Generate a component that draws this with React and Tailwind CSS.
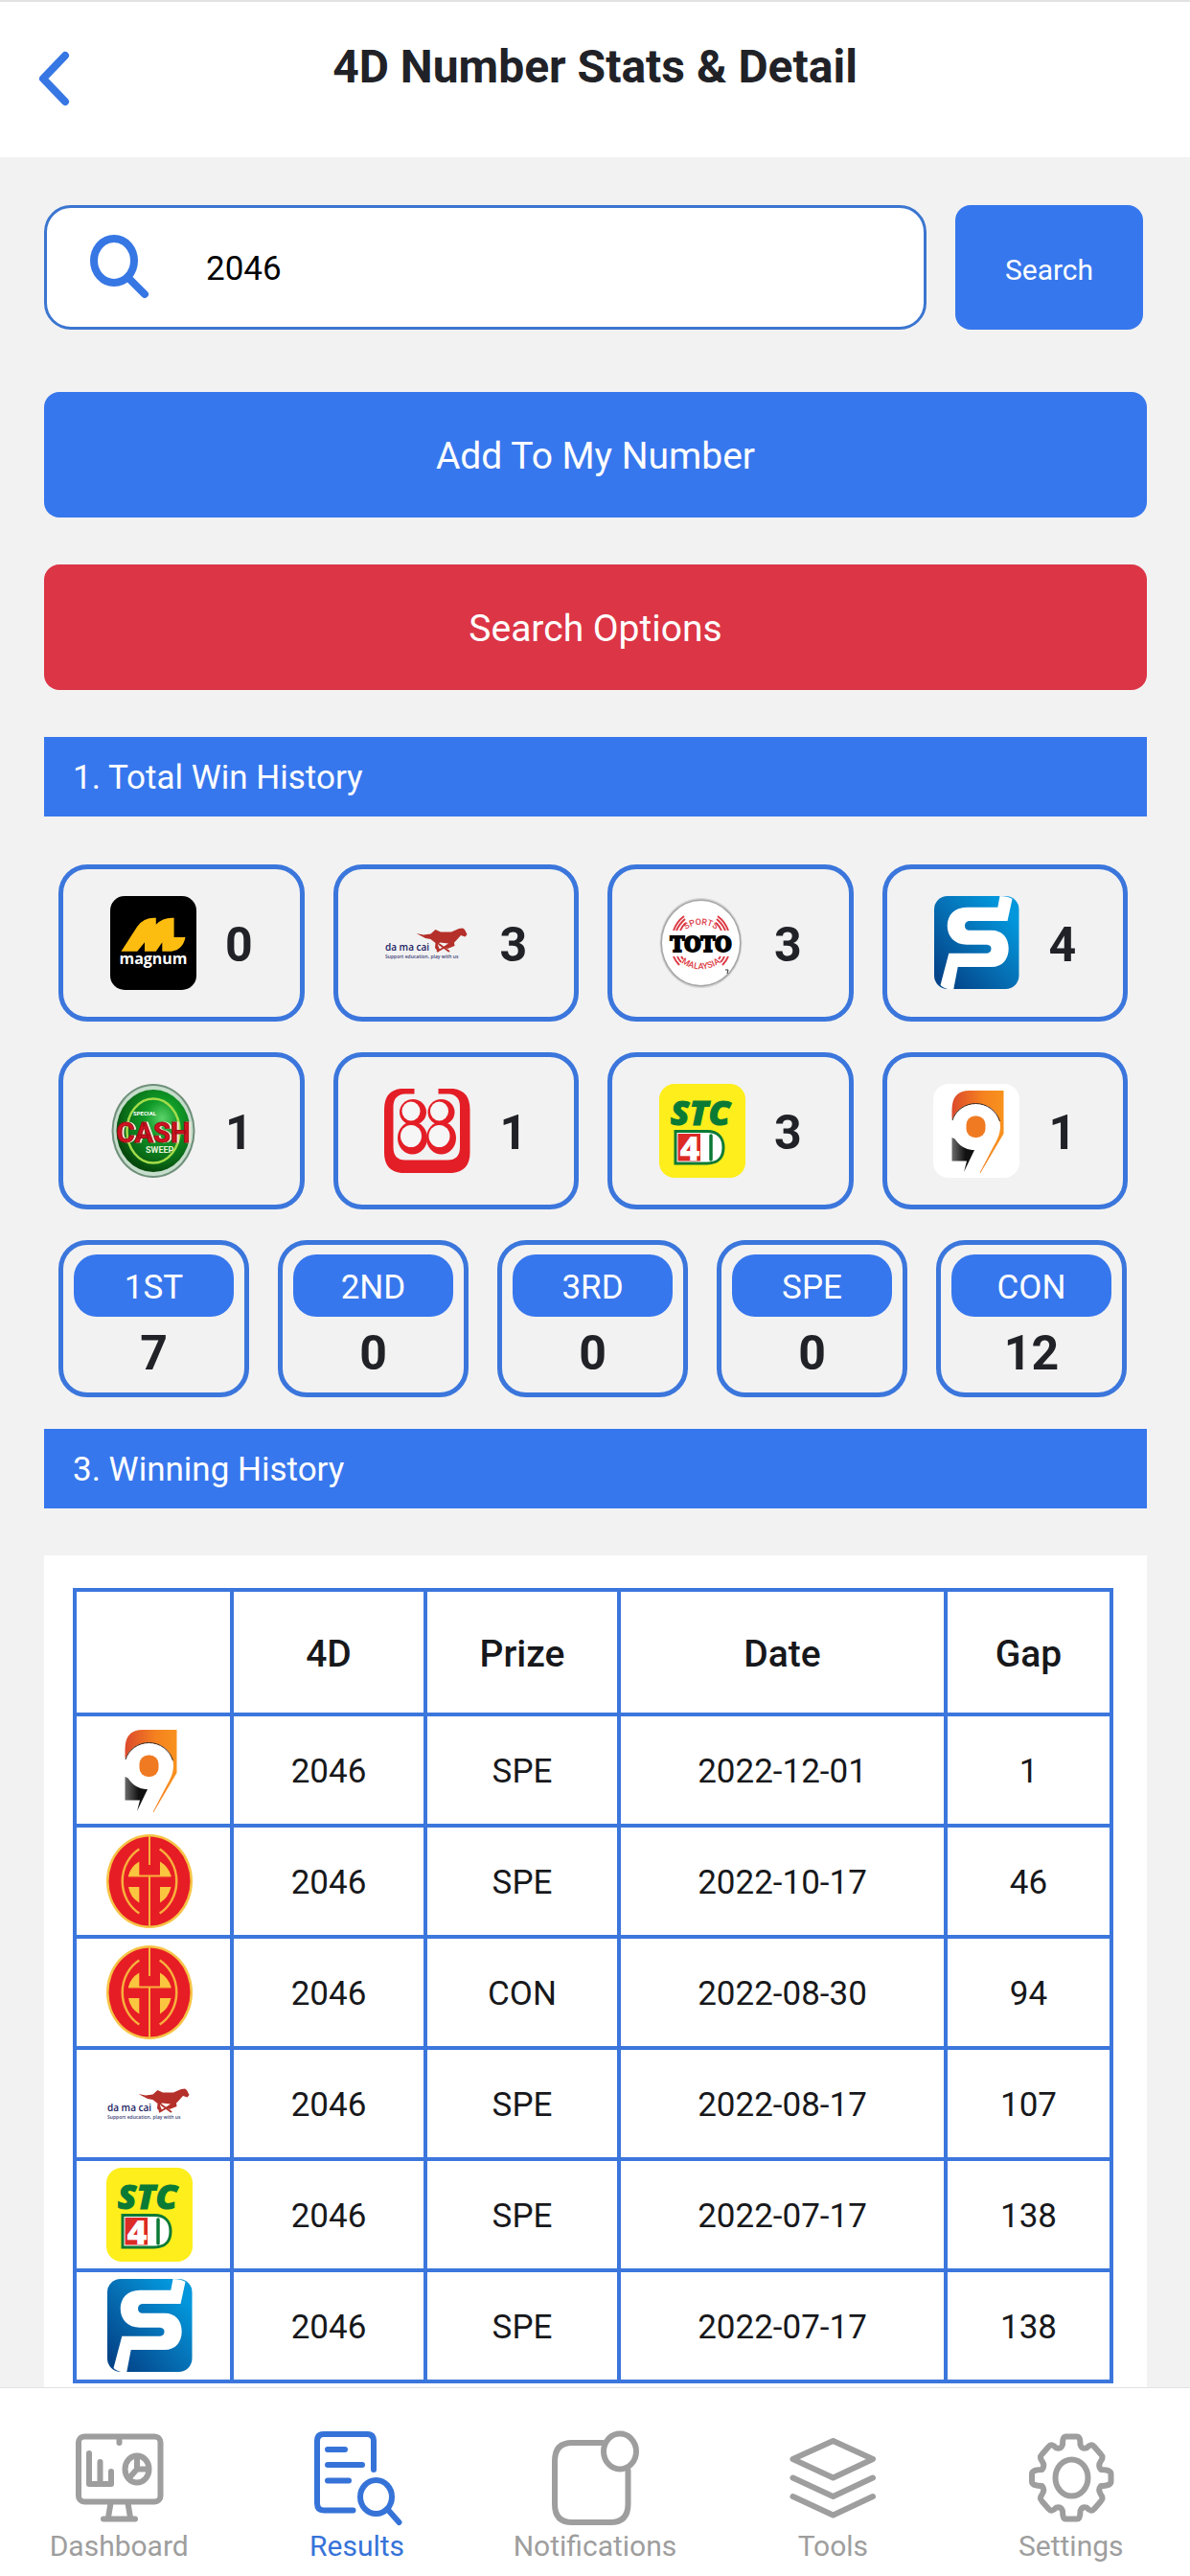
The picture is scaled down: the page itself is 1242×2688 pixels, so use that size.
import { useState } from "react";

const totals = [
  { logo: "magnum", count: 0 },
  { logo: "damacai", count: 3 },
  { logo: "toto", count: 3 },
  { logo: "singapore", count: 4 },
  { logo: "cashsweep", count: 1 },
  { logo: "sabah88", count: 1 },
  { logo: "stc", count: 3 },
  { logo: "lotto9", count: 1 },
];

const prizes = [
  { name: "1ST", count: 7 },
  { name: "2ND", count: 0 },
  { name: "3RD", count: 0 },
  { name: "SPE", count: 0 },
  { name: "CON", count: 12 },
];

const history = [
  { logo: "lotto9", number: "2046", prize: "SPE", date: "2022-12-01", gap: 1 },
  { logo: "dragon", number: "2046", prize: "SPE", date: "2022-10-17", gap: 46 },
  { logo: "dragon", number: "2046", prize: "CON", date: "2022-08-30", gap: 94 },
  { logo: "damacai", number: "2046", prize: "SPE", date: "2022-08-17", gap: 107 },
  { logo: "stc", number: "2046", prize: "SPE", date: "2022-07-17", gap: 138 },
  { logo: "singapore", number: "2046", prize: "SPE", date: "2022-07-17", gap: 138 },
];

// Operator logos, all drawn on a 90 x 98 box
function Magnum() {
  return (
    <>
      <rect width="90" height="98" rx="15" fill="#000" />
      <path
        d="M11.5 57.7H28.3L36 48.3V57.7H47.8L54.3 48.3V57.7H64Q76 56 78.5 43H66.6V22.7Q55 22 47.8 29.7V22.7Q35 22 28.3 31.7Z"
        fill="#fdbd10"
      />
      <text x="45" y="71" textAnchor="middle" fontFamily="Open Sans, sans-serif" fontWeight="700" fontSize="16" fill="#fff">
        magnum
      </text>
    </>
  );
}

function DaMaCai() {
  return (
    <>
      <path
        d="M33.5 39L41 40.5L48.5 39.5L53.5 35L59 37.5L70 37.5L78 34L82 33.5L84 35L86.5 40L84.5 42.5L80 41L75.5 46L73 48.5L73.5 52L66 55L62 53L67 49.5L58 48.5L56 51L58 56L56 58L53 54L53.5 49L48.5 45L43 44Z"
        fill="#b5302a"
      />
      <path d="M57 50L68 58M67 51L55 58" stroke="#b5302a" strokeWidth="2" fill="none" />
      <text x="1" y="57" fontFamily="Open Sans, sans-serif" fontWeight="600" fontSize="10" fill="#1c2263">
        da ma cai
      </text>
      <text x="1" y="65" fontFamily="Open Sans, sans-serif" fontWeight="600" fontSize="5" fill="#3c4078">
        Support education, play with us
      </text>
    </>
  );
}

function Toto() {
  return (
    <>
      <defs>
        <path id="toto-top" d="M19 49A25 24 0 0 1 68 49" />
        <path id="toto-bottom" d="M11 49A33 33 0 0 0 76 49" />
      </defs>
      <ellipse cx="43.5" cy="49" rx="43" ry="47" fill="#d4d4d4" />
      <ellipse cx="43.5" cy="49" rx="42" ry="45.5" fill="#a6a6a6" />
      <ellipse cx="43.5" cy="49" rx="40.5" ry="44" fill="#fff" />
      <g fill="none" stroke="#dc3b45" strokeWidth="2">
        <path d="M15 36Q18 27 26 21M18 36Q21 29 27 24M22 36Q24 31 28 28" />
        <path d="M72 36Q69 27 61 21M69 36Q66 29 60 24M65 36Q63 31 59 28" />
        <path d="M15 63Q17 68 21 72M19 63Q20 66 23 69M23 63L25 66" />
        <path d="M72 63Q70 68 66 72M68 63Q67 66 64 69M64 63L62 66" />
      </g>
      <text fontFamily="Roboto, sans-serif" fontWeight="500" fontSize="9" fill="#dc3b45" textAnchor="middle">
        <textPath href="#toto-top" startOffset="50%">
          SPORTS
        </textPath>
      </text>
      <text fontFamily="Roboto, sans-serif" fontWeight="500" fontSize="9" fill="#dc3b45" textAnchor="middle">
        <textPath href="#toto-bottom" startOffset="50%">
          MALAYSIA
        </textPath>
      </text>
      <text
        x="43.5"
        y="58"
        textAnchor="middle"
        fontFamily="DejaVu Serif Condensed, DejaVu Serif, serif"
        fontWeight="700"
        fontSize="22"
        fill="#000"
        stroke="#000"
        strokeWidth="2"
      >
        TOTO
      </text>
      <path d="M69 77h3l-1 4" stroke="#333" fill="none" />
    </>
  );
}

function Singapore() {
  return (
    <>
      <defs>
        <linearGradient id="sg-blue" x1="0" y1="1" x2="1" y2="0">
          <stop offset="0.1" stopColor="#034489" />
          <stop offset="0.5" stopColor="#0670b5" />
          <stop offset="0.85" stopColor="#0297dc" />
        </linearGradient>
      </defs>
      <rect x="1" y="0" width="88.5" height="97" rx="14" fill="url(#sg-blue)" />
      <path
        d="M69.5 0L67.3 11.7H35C22 11.7 14.7 20 14.7 31S22 50.7 35 50.7H56Q60.5 51 60.5 55T56 59.7H16.3L7.5 93Q12 98 21.3 97L25.7 74H61C72 74 78.7 66 78.7 54.7S72 35.7 61 35.7H37Q33 35 33 31T37 26H77.5L82.5 3Q78 0 69.5 0Z"
        fill="#fff"
      />
    </>
  );
}

function CashSweep() {
  return (
    <>
      <defs>
        <radialGradient id="cash-green" cx="0.62" cy="0.35" r="0.65">
          <stop offset="0" stopColor="#5cd46a" />
          <stop offset="0.35" stopColor="#109a28" />
          <stop offset="0.8" stopColor="#0a6b17" />
          <stop offset="1" stopColor="#064a0d" />
        </radialGradient>
      </defs>
      <ellipse cx="45" cy="49" rx="43.5" ry="49" fill="#6f8f7a" />
      <ellipse cx="45" cy="49" rx="41.5" ry="47" fill="#c5ddcb" />
      <ellipse cx="45" cy="49" rx="38.5" ry="43" fill="url(#cash-green)" />
      <ellipse cx="45" cy="49" rx="27.5" ry="33.5" fill="none" stroke="#a4dc4b" strokeWidth="2.5" />
      <text x="24" y="33" fontFamily="Roboto, sans-serif" fontWeight="700" fontSize="6" fill="#fff">
        SPECIAL
      </text>
      <text
        x="45"
        y="61"
        textAnchor="middle"
        fontFamily="Roboto, sans-serif"
        fontWeight="700"
        fontSize="29"
        fill="#cf1220"
        stroke="#9c0d16"
        className="drop-shadow-[2px_0_0_#f4e6d8]"
      >
        CASH
      </text>
      <text x="37" y="71.5" fontFamily="Roboto, sans-serif" fontWeight="700" fontSize="9" fill="#e6f2d8">
        SWEEP
      </text>
    </>
  );
}

function Sabah88() {
  return (
    <>
      <path
        d="M31.5 5V10.5H22Q9.5 11 9.5 24V66Q9.5 79.5 22 79.5H66Q79 79.5 79 66V24Q79 11 67 10.5H56.5V5H72Q89.5 7 89.5 27V72Q89.5 91 71 93H18Q0 91 0 72V27Q0 7 17 5Z"
        fill="#e41e26"
      />
      <g fill="#e41e26">
        <ellipse cx="30" cy="29.5" rx="14" ry="13.5" />
        <ellipse cx="59.5" cy="29.5" rx="14" ry="13.5" />
        <ellipse cx="29.5" cy="56.5" rx="15.5" ry="17" />
        <ellipse cx="59.5" cy="56.5" rx="15.5" ry="17" />
      </g>
      <g fill="#f6f6f6">
        <ellipse cx="28" cy="28.5" rx="9.5" ry="10" />
        <ellipse cx="57.5" cy="28.5" rx="9.5" ry="10" />
        <ellipse cx="28" cy="54.5" rx="11" ry="11.5" />
        <ellipse cx="57.5" cy="54.5" rx="11" ry="11.5" />
      </g>
    </>
  );
}

function Stc() {
  return (
    <>
      <rect width="90" height="98" rx="16" fill="#fdee1c" />
      <text
        x="43"
        y="43"
        textAnchor="middle"
        fontFamily="Open Sans, sans-serif"
        fontWeight="800"
        fontStyle="italic"
        fontSize="36"
        fill="#0a7a35"
        stroke="#0a7a35"
        strokeWidth="1"
      >
        STC
      </text>
      <path d="M17 49.5H50C62 49.5 67 57 67 66.5S62 83 50 83H17Z" fill="#fff" stroke="#0a7a35" strokeWidth="3" />
      <path d="M19.5 52H43V80.5H19.5Z" fill="#dc2a26" />
      <path d="M54 54V79" stroke="#0a7a35" strokeWidth="3.5" strokeLinecap="round" />
      <text x="32" y="79.5" textAnchor="middle" fontFamily="Open Sans, sans-serif" fontWeight="800" fontSize="36" fill="#fff">
        4
      </text>
    </>
  );
}

function Lotto9() {
  return (
    <>
      <defs>
        <linearGradient id="nine-orange" x1="0" y1="0" x2="1" y2="0">
          <stop offset="0" stopColor="#dc4a2c" />
          <stop offset="0.6" stopColor="#f5821f" />
          <stop offset="1" stopColor="#f8921e" />
        </linearGradient>
        <linearGradient id="nine-black" x1="0" y1="0" x2="1" y2="0">
          <stop offset="0" stopColor="#6b6b6b" />
          <stop offset="0.6" stopColor="#111" />
        </linearGradient>
      </defs>
      <rect width="90" height="98" rx="16" fill="#fff" />
      <path d="M19.5 36V27Q19.5 7 38 7H73.5V52L49 93.5L44 60Z" fill="url(#nine-orange)" />
      <path d="M19.5 56L43 66V69L32 92L35 80.5H19.5Z" fill="url(#nine-black)" />
      <path
        d="M19 44C19 31 30 20.5 44.5 20.5S70 31 70 44C70 53 66 60 62 67L48.5 93H33L45 69C30 70 19 58 19 44Z"
        fill="#fff"
      />
      <path d="M20 38C23 28 33 20.5 44.5 20.5S66 28 69.5 39" fill="none" stroke="#3a2015" />
      <rect x="34.5" y="33.5" width="20" height="22.5" rx="9" fill="#f07a22" />
    </>
  );
}

function Dragon() {
  return (
    <>
      <ellipse cx="45" cy="49" rx="45" ry="49" fill="#f6c445" />
      <ellipse cx="45" cy="49" rx="42.5" ry="46.5" fill="#e71d25" />
      <g fill="none" stroke="#f8b03c" strokeWidth="2.5">
        <path d="M34.3 15.5A36 39 0 0 0 34.3 82.5" />
        <path d="M55.7 15.5A36 39 0 0 1 55.7 82.5" />
        <path d="M45 2V32M45 43.5V96M23 43.5H67.5" strokeWidth="2" />
      </g>
      <g fill="#fbc63f">
        <path d="M23 43.5Q25 34 34.3 28.5V43.5Z" />
        <path d="M67.5 43.5Q65 34 56 28.5V43.5Z" />
        <path d="M23 55H34.3V71.5Q25 66 23 55Z" />
        <path d="M67.5 55H56V71.5Q65 66 67.5 55Z" />
      </g>
    </>
  );
}

const logos = {
  magnum: Magnum,
  damacai: DaMaCai,
  toto: Toto,
  singapore: Singapore,
  cashsweep: CashSweep,
  sabah88: Sabah88,
  stc: Stc,
  lotto9: Lotto9,
  dragon: Dragon,
};

function Logo({ name }) {
  const Drawing = logos[name];
  return (
    <svg viewBox="0 0 90 98" className="w-[90px] h-[98px] shrink-0">
      <Drawing />
    </svg>
  );
}

// Bottom tab icons, 96 x 100 box
const tabs = [
  {
    name: "Dashboard",
    icon: (
      <>
        <rect x="6" y="6.5" width="85.5" height="68" rx="6" />
        <path d="M48.5 8V13M17 24V56H40V43M28.5 33V56" />
        <ellipse cx="67" cy="40.5" rx="12.5" ry="14" />
        <path d="M67 27V40.5H79M67 40.5L58.5 50M39.5 76L37 91M57.5 76L60 91M32 92.5H65" />
      </>
    ),
  },
  {
    name: "Results",
    icon: (
      <>
        <path d="M65 41V11Q65 4 58 4H13Q6 4 6 11V76Q6 83.5 13 83.5H43.5" />
        <path d="M17 20H35M17 36H53M17 52.5H39" />
        <ellipse cx="67.5" cy="69.5" rx="16.5" ry="17.5" />
        <path d="M80 83L91.5 96" />
      </>
    ),
  },
  {
    name: "Notifications",
    icon: (
      <>
        <path d="M56 13H24Q6 13 6 32V77Q6 96 24 96H64Q82.5 96 82.5 77V42" />
        <ellipse cx="74" cy="22" rx="17" ry="18.5" />
      </>
    ),
  },
  {
    name: "Tools",
    icon: (
      <>
        <path d="M48.5 11L90 30L48.5 49.5L6.5 30Z" />
        <path d="M6.5 49.5L48.5 69L90 49.5M6.5 69L48.5 88.5L90 69" />
      </>
    ),
  },
  {
    name: "Settings",
    icon: (
      <>
        <path d="M42 6.5H54.5Q57.5 6.5 57.5 15Q59 20 64 18.5Q69 13 72 17L79 25Q82 28 79 32Q75.5 37 79 41Q89.5 41 89.5 45.5V53.5Q89.5 58 79 58Q75.5 62 79 67Q82 71 79 74L72 82Q69 86 64 80.5Q59 79 57.5 84Q57.5 92.5 54.5 92.5H42Q39 92.5 39 84Q37.5 79 32.5 80.5Q27.5 86 24.5 82L17.5 74Q14.5 71 17.5 67Q21 62 17.5 58Q7 58 7 53.5V45.5Q7 41 17.5 41Q21 37 17.5 32Q14.5 28 17.5 25L24.5 17Q27.5 13 32.5 18.5Q37.5 20 39 15Q39 6.5 42 6.5Z" />
        <ellipse cx="48.5" cy="49.5" rx="17" ry="19" />
      </>
    ),
  },
];

function SectionTitle({ children }) {
  return (
    <h2 className="h-[83px] px-[30px] pt-1 flex items-center bg-[#3777ed] text-white text-[35px]">{children}</h2>
  );
}

export default function App() {
  const [number, setNumber] = useState("2046");
  const [activeTab, setActiveTab] = useState("Results");

  return (
    <div className="h-screen flex flex-col bg-[#f2f2f2] text-[#212227] font-['Roboto',sans-serif]">
      {/* Header */}
      <header className="h-[164px] shrink-0 grid grid-cols-[1fr_auto_1fr] items-start bg-white border-t-2 border-[#e2e2e2]">
        <button type="button" aria-label="Back" className="w-20 h-16 ml-8 mt-12">
          <svg viewBox="0 0 80 64" className="w-20 h-16" fill="none" stroke="#3777e4" strokeWidth="8" strokeLinecap="round" strokeLinejoin="round">
            <path d="M36 8L13 32L36 56" />
          </svg>
        </button>
        <h1 className="mt-9 leading-[64px] text-[48px] font-bold">4D Number Stats &amp; Detail</h1>
      </header>

      <main className="flex-1 min-h-0 overflow-y-auto [scrollbar-width:none] pl-[46px] pr-[45px] pt-[50px]">
        {/* Search */}
        <form className="flex gap-[30px] pr-1" onSubmit={(e) => e.preventDefault()}>
          <label className="flex-1 h-[130px] flex items-center pl-[42px] bg-white border-3 border-[#3b76d0] rounded-[28px]">
            <svg viewBox="0 0 70 76" className="w-[70px] h-[76px]" fill="none" stroke="#3777e4" strokeWidth="8" strokeLinecap="round">
              <ellipse cx="28" cy="31" rx="21" ry="23" />
              <path d="M43 49L60 66" />
            </svg>
            <input
              type="text"
              aria-label="4D number"
              value={number}
              onChange={(e) => setNumber(e.target.value)}
              className="flex-1 min-w-0 ml-[54px] mr-6 pt-1 text-[35px] text-black outline-none"
            />
          </label>
          <button type="submit" className="w-[196px] h-[130px] pt-1 rounded-2xl bg-[#3777ed] text-white text-[30px]">
            Search
          </button>
        </form>

        <button type="button" className="mt-[65px] w-full h-[131px] pt-1 rounded-2xl bg-[#3777ed] text-white text-[39px]">
          Add To My Number
        </button>
        <button type="button" className="mt-[49px] mb-[49px] w-full h-[131px] pt-1 rounded-2xl bg-[#dc3546] text-white text-[39px]">
          Search Options
        </button>

        {/* Wins per operator */}
        <SectionTitle>1. Total Win History</SectionTitle>
        <div className="mt-[50px] pl-[15px] pr-5 grid grid-cols-4 gap-x-[30px] gap-y-8">
          {totals.map((item) => (
            <div key={item.logo} className="h-[164px] flex items-center justify-center gap-[30px] border-5 border-[#3b76dc] rounded-[30px]">
              <Logo name={item.logo} />
              <span className="pt-1 text-[50px] font-bold">{item.count}</span>
            </div>
          ))}
        </div>

        {/* Wins per prize */}
        <div className="mt-8 mb-[33px] pl-[15px] pr-[21px] grid grid-cols-5 gap-[30px]">
          {prizes.map((prize) => (
            <div key={prize.name} className="h-[164px] px-[11px] pt-[10px] text-center border-5 border-[#3b76dc] rounded-[30px]">
              <div className="h-[65px] leading-[70px] rounded-3xl bg-[#3777ed] text-white text-[35px]">{prize.name}</div>
              <div className="leading-[76px] text-[50px] font-bold">{prize.count}</div>
            </div>
          ))}
        </div>

        <SectionTitle>3. Winning History</SectionTitle>
        <div className="mt-[49px] pl-[30px] pr-[35px] pt-[34px] pb-12 bg-white">
          <table className="w-full table-fixed text-center text-[35px] text-[#17181b]">
            <colgroup>
              <col className="w-[164px]" />
              <col className="w-[202px]" />
              <col className="w-[202px]" />
              <col />
              <col className="w-[173px]" />
            </colgroup>
            <thead>
              <tr className="h-[130px] text-[39px]">
                <th className="border-4 border-[#3b76dc]" aria-label="Operator"></th>
                <th className="pt-1 border-4 border-[#3b76dc] font-medium">4D</th>
                <th className="pt-1 border-4 border-[#3b76dc] font-medium">Prize</th>
                <th className="pt-1 border-4 border-[#3b76dc] font-medium">Date</th>
                <th className="pt-1 border-4 border-[#3b76dc] font-medium">Gap</th>
              </tr>
            </thead>
            <tbody>
              {history.map((row) => (
                <tr key={row.logo + row.date} className="h-[116px]">
                  <td className="border-4 border-[#3b76dc]">
                    <div className="flex justify-center pr-2">
                      <Logo name={row.logo} />
                    </div>
                  </td>
                  <td className="pt-1 border-4 border-[#3b76dc]">{row.number}</td>
                  <td className="pt-1 border-4 border-[#3b76dc]">{row.prize}</td>
                  <td className="pt-1 border-4 border-[#3b76dc]">{row.date}</td>
                  <td className="pt-1 border-4 border-[#3b76dc]">{row.gap}</td>
                </tr>
              ))}
            </tbody>
          </table>
        </div>
      </main>

      {/* Bottom tabs */}
      <nav className="h-[197px] shrink-0 grid grid-cols-5 bg-white border-t border-[#e2e2e2]">
        {tabs.map((tab) => (
          <button
            key={tab.name}
            type="button"
            onClick={() => setActiveTab(tab.name)}
            className={`flex flex-col items-center pt-11 ${activeTab === tab.name ? "text-[#3673d8]" : "text-[#9e9e9e]"}`}
          >
            <svg viewBox="0 0 96 100" className="w-24 h-[100px]" fill="none" stroke="currentColor" strokeWidth="6" strokeLinecap="round" strokeLinejoin="round">
              {tab.icon}
            </svg>
            <span className="leading-[42px] text-[30px]">{tab.name}</span>
          </button>
        ))}
      </nav>
    </div>
  );
}
